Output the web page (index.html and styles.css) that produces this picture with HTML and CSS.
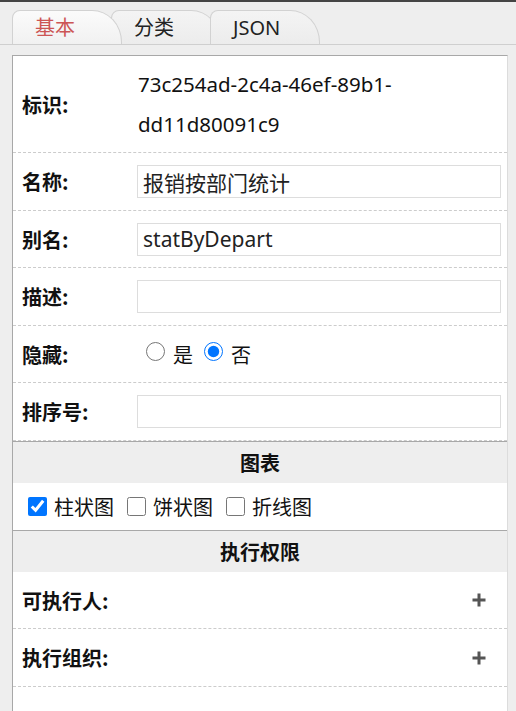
FILE: index.html
```html
<!DOCTYPE html>
<html lang="zh-CN">
<head>
    <meta charset="UTF-8">
    <meta name="viewport" content="width=device-width, initial-scale=1.0">
    <title>统计属性</title>
    <link rel="stylesheet" href="styles.css">
</head>
<body>

    <div class="tabs">
        <div class="tab active">基本</div>
        <div class="tab">分类</div>
        <div class="tab">JSON</div>
    </div>

    <div class="panel">
        <div class="row first">
            <label class="label">标识:</label>
            <div class="value">73c254ad-2c4a-46ef-89b1-dd11d80091c9</div>
        </div>
        <div class="row">
            <label class="label" for="name">名称:</label>
            <input type="text" id="name" value="报销按部门统计">
        </div>
        <div class="row">
            <label class="label" for="alias">别名:</label>
            <input type="text" id="alias" value="statByDepart">
        </div>
        <div class="row">
            <label class="label" for="desc">描述:</label>
            <input type="text" id="desc">
        </div>
        <div class="row">
            <label class="label">隐藏:</label>
            <div class="options">
                <label class="radio"><input type="radio" name="hidden"><span>是</span></label>
                <label class="radio"><input type="radio" name="hidden" checked><span>否</span></label>
            </div>
        </div>
        <div class="row">
            <label class="label" for="order">排序号:</label>
            <input type="text" id="order">
        </div>

        <div class="section-title">图表</div>
        <div class="checks">
            <label class="check"><input type="checkbox" checked><span>柱状图</span></label>
            <label class="check"><input type="checkbox"><span>饼状图</span></label>
            <label class="check"><input type="checkbox"><span>折线图</span></label>
        </div>

        <div class="section-title">执行权限</div>
        <div class="row perm">
            <span class="label">可执行人:</span>
            <span class="add">
                <svg width="14" height="14" viewBox="0 0 14 14"><path d="M7 0.5v13M0.5 7h13" stroke="#555" stroke-width="3"/></svg>
            </span>
        </div>
        <div class="row perm">
            <span class="label">执行组织:</span>
            <span class="add">
                <svg width="14" height="14" viewBox="0 0 14 14"><path d="M7 0.5v13M0.5 7h13" stroke="#555" stroke-width="3"/></svg>
            </span>
        </div>
    </div>

</body>
</html>
```

FILE: styles.css
```css
body {
    margin: 0;
    background-color: #eeeeee;
    border-top: 2px solid #444;
    font-family: "Noto Sans", "Noto Sans CJK SC", sans-serif;
    font-size: 20px;
    color: #111;
}
.tabs {
    display: flex;
    padding: 8px 0 0 12px;
    border-bottom: 1px solid #cfcfcf;
}
.tab {
    position: relative;
    z-index: 1;
    box-sizing: border-box;
    width: 110px;
    height: 34px;
    padding-left: 22px;
    line-height: 33px;
    border: 1px solid #d2d2d2;
    border-bottom: none;
    border-radius: 8px 30px 0 0 / 8px 32px 0 0;
    background: linear-gradient(#f4f4f4, #ececec);
    color: #222;
}
.tab + .tab {
    margin-left: -11px;
}
.tab.active {
    z-index: 3;
    color: #cc5555;
    background: linear-gradient(#fbfbfb, #f1f1f1);
}
.panel {
    margin: 10px 8px 0 12px;
    padding-bottom: 30px;
    background-color: #fff;
    border-top: 1px solid #a8a8a8;
    border-left: 1px solid #a8a8a8;
    border-right: 1px solid #dcdcdc;
}
.row {
    display: flex;
    align-items: center;
    padding: 12px 6px 11.5px 9px;
    border-bottom: 1px dashed #cccccc;
}
.row.first {
    padding-top: 8px;
    padding-bottom: 8px;
}
.label {
    flex: 0 0 115px;
    font-weight: bold;
    font-family: "Noto Sans CJK SC", sans-serif;
}
.value {
    flex: 1;
    padding-left: 1px;
    font-size: 20.5px;
    line-height: 40px;
}
input[type="text"] {
    flex: 1;
    min-width: 0;
    box-sizing: border-box;
    height: 33px;
    margin: 0;
    padding: 0 5px;
    border: 1px solid #dddddd;
    font-family: "Noto Sans", "Noto Sans CJK SC", sans-serif;
    font-size: 21px;
    color: #222;
}
.options {
    display: flex;
    align-items: center;
    height: 33px;
}
.radio, .check {
    display: flex;
    align-items: center;
}
.radio input {
    width: 19px;
    height: 19px;
    margin: 0 8px 5px 9px;
}
.radio + .radio {
    margin-left: 2px;
}
.checks {
    display: flex;
    align-items: center;
    gap: 13px;
    height: 47px;
    padding-left: 15px;
}
.check input {
    width: 19px;
    height: 19px;
    margin: 0 7px 0 0;
}
.section-title {
    height: 41px;
    line-height: 41px;
    text-align: center;
    font-weight: bold;
    font-family: "Noto Sans CJK SC", sans-serif;
    background-color: #eeeeee;
    border-top: 1px solid #a8a8a8;
}
.row.perm {
    height: 33px;
    justify-content: space-between;
}
.add {
    display: flex;
    margin-right: 15px;
}
```
